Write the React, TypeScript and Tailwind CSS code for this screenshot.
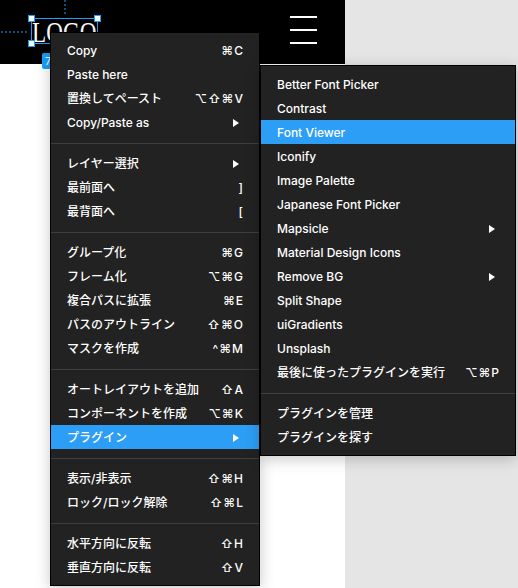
import React from 'react';

type Row = { label: string; sc?: string; sub?: boolean; active?: boolean };
type Item = Row | 'sep';

const mainItems: Item[] = [
  { label: 'Copy', sc: '⌘C' },
  { label: 'Paste here' },
  { label: '置換してペースト', sc: '⌥⇧⌘V' },
  { label: 'Copy/Paste as', sub: true },
  'sep',
  { label: 'レイヤー選択', sub: true },
  { label: '最前面へ', sc: ']' },
  { label: '最背面へ', sc: '[' },
  'sep',
  { label: 'グループ化', sc: '⌘G' },
  { label: 'フレーム化', sc: '⌥⌘G' },
  { label: '複合パスに拡張', sc: '⌘E' },
  { label: 'パスのアウトライン', sc: '⇧⌘O' },
  { label: 'マスクを作成', sc: '^⌘M' },
  'sep',
  { label: 'オートレイアウトを追加', sc: '⇧A' },
  { label: 'コンポーネントを作成', sc: '⌥⌘K' },
  { label: 'プラグイン', sub: true, active: true },
  'sep',
  { label: '表示/非表示', sc: '⇧⌘H' },
  { label: 'ロック/ロック解除', sc: '⇧⌘L' },
  'sep',
  { label: '水平方向に反転', sc: '⇧H' },
  { label: '垂直方向に反転', sc: '⇧V' },
];

const subItems: Item[] = [
  { label: 'Better Font Picker' },
  { label: 'Contrast' },
  { label: 'Font Viewer', active: true },
  { label: 'Iconify' },
  { label: 'Image Palette' },
  { label: 'Japanese Font Picker' },
  { label: 'Mapsicle', sub: true },
  { label: 'Material Design Icons' },
  { label: 'Remove BG', sub: true },
  { label: 'Split Shape' },
  { label: 'uiGradients' },
  { label: 'Unsplash' },
  { label: '最後に使ったプラグインを実行', sc: '⌥⌘P' },
  'sep',
  { label: 'プラグインを管理' },
  { label: 'プラグインを探す' },
];

function Arrow() {
  return (
    <svg className="mr-[5px]" width="6" height="8" viewBox="0 0 6 8">
      <path d="M0 0L6 4L0 8Z" fill="white" />
    </svg>
  );
}

function Menu({ items, className }: { items: Item[]; className: string }) {
  return (
    <div
      className={`absolute bg-[#222222] border border-black shadow-[0_3px_14px_rgba(0,0,0,0.22)] ${className}`}
    >
      {items.map((it, i) =>
        it === 'sep' ? (
          <div key={i} className="pt-[9px] pb-[7px]">
            <div className="h-px bg-[#3f3f3f]" />
          </div>
        ) : (
          <div
            key={i}
            className={`h-6 pt-px flex items-center justify-between pl-4 pr-[15px] text-white text-[12px] font-medium ${
              it.active ? 'bg-[#2c9ef5]' : ''
            }`}
          >
            <span>{it.label}</span>
            {it.sc && (
              <span className="tracking-[1px] font-['Inter','DejaVu_Sans',sans-serif]">{it.sc}</span>
            )}
            {it.sub && <Arrow />}
          </div>
        )
      )}
    </div>
  );
}

function Logo() {
  return (
    <div className="relative w-[67px] h-[26px] border border-[#18a0fb] flex items-center justify-center mb-[2px]">
      <span className="text-white font-['Liberation_Serif',serif] text-[29px] leading-none scale-x-[0.8] mt-[3px]">
        LOGO
      </span>
      <svg className="absolute left-[32px] -top-[19px]" width="2" height="16">
        <line x1="1" y1="0" x2="1" y2="16" stroke="#18a0fb" strokeWidth="1" strokeDasharray="2 2" />
      </svg>
      <svg className="absolute -left-[31px] top-[12px]" width="27" height="2">
        <line x1="0" y1="1" x2="27" y2="1" stroke="#18a0fb" strokeWidth="1" strokeDasharray="2 2" />
      </svg>
      <div className="absolute -left-[4px] -top-[4px] w-[7px] h-[7px] bg-white border border-[#18a0fb]" />
      <div className="absolute -right-[4px] -top-[4px] w-[7px] h-[7px] bg-white border border-[#18a0fb]" />
      <div className="absolute -left-[4px] -bottom-[4px] w-[7px] h-[7px] bg-white border border-[#18a0fb]" />
      <div className="absolute -right-[4px] -bottom-[4px] w-[7px] h-[7px] bg-white border border-[#18a0fb]" />
      <div className="absolute left-[10px] top-[34px] h-4 w-[9px] overflow-hidden pl-[3px] rounded-l-[2px] bg-[#18a0fb] text-white text-[11px] leading-4 whitespace-nowrap">
        7
      </div>
    </div>
  );
}

export default function App() {
  return (
    <div className="relative w-[518px] h-[588px] overflow-hidden flex font-['Inter','Noto_Sans_CJK_JP',sans-serif]">
      <div className="w-[345px] flex flex-col bg-white">
        <header className="h-16 bg-black flex items-center justify-between pl-[31px] pr-[28px]">
          <Logo />
          <div className="flex flex-col gap-[11px] mb-[4px]">
            <div className="h-[2px] w-[27px] bg-white" />
            <div className="h-[2px] w-[27px] bg-white" />
            <div className="h-[2px] w-[27px] bg-white" />
          </div>
        </header>
      </div>
      <div className="flex-1 bg-[#e5e5e5]" />
      <Menu items={mainItems} className="left-[50px] top-[32px] w-[210px] pt-[5px] pb-[6px]" />
      <Menu items={subItems} className="left-[260px] top-[65px] w-[256px] pt-[6px] pb-[6px]" />
    </div>
  );
}
